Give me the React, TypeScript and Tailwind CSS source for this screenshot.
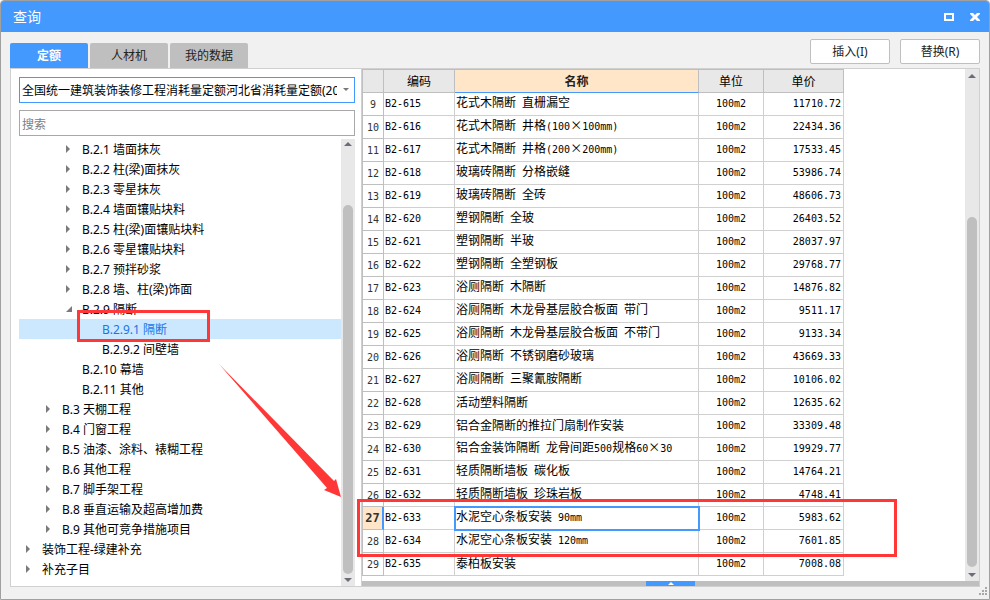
import React from "react";
import { clsx } from "clsx";

type TreeNode = { label: string; level: number; state?: "closed" | "open"; selected?: boolean };

const tree: TreeNode[] = [
  { label: "B.2.1 墙面抹灰", level: 2, state: "closed" },
  { label: "B.2.2 柱(梁)面抹灰", level: 2, state: "closed" },
  { label: "B.2.3 零星抹灰", level: 2, state: "closed" },
  { label: "B.2.4 墙面镶贴块料", level: 2, state: "closed" },
  { label: "B.2.5 柱(梁)面镶贴块料", level: 2, state: "closed" },
  { label: "B.2.6 零星镶贴块料", level: 2, state: "closed" },
  { label: "B.2.7 预拌砂浆", level: 2, state: "closed" },
  { label: "B.2.8 墙、柱(梁)饰面", level: 2, state: "closed" },
  { label: "B.2.9 隔断", level: 2, state: "open" },
  { label: "B.2.9.1 隔断", level: 3, selected: true },
  { label: "B.2.9.2 间壁墙", level: 3 },
  { label: "B.2.10 幕墙", level: 2 },
  { label: "B.2.11 其他", level: 2 },
  { label: "B.3 天棚工程", level: 1, state: "closed" },
  { label: "B.4 门窗工程", level: 1, state: "closed" },
  { label: "B.5 油漆、涂料、裱糊工程", level: 1, state: "closed" },
  { label: "B.6 其他工程", level: 1, state: "closed" },
  { label: "B.7 脚手架工程", level: 1, state: "closed" },
  { label: "B.8 垂直运输及超高增加费", level: 1, state: "closed" },
  { label: "B.9 其他可竞争措施项目", level: 1, state: "closed" },
  { label: "装饰工程-绿建补充", level: 0, state: "closed" },
  { label: "补充子目", level: 0, state: "closed" },
];

const indents = ["pl-1", "pl-6", "pl-11", "pl-16"];

const names: [string, string][] = [
  ["花式木隔断 直栅漏空", "11710.72"],
  ["花式木隔断 井格(100×100mm)", "22434.36"],
  ["花式木隔断 井格(200×200mm)", "17533.45"],
  ["玻璃砖隔断 分格嵌缝", "53986.74"],
  ["玻璃砖隔断 全砖", "48606.73"],
  ["塑钢隔断 全玻", "26403.52"],
  ["塑钢隔断 半玻", "28037.97"],
  ["塑钢隔断 全塑钢板", "29768.77"],
  ["浴厕隔断 木隔断", "14876.82"],
  ["浴厕隔断 木龙骨基层胶合板面 带门", "9511.17"],
  ["浴厕隔断 木龙骨基层胶合板面 不带门", "9133.34"],
  ["浴厕隔断 不锈钢磨砂玻璃", "43669.33"],
  ["浴厕隔断 三聚氰胺隔断", "10106.02"],
  ["活动塑料隔断", "12635.62"],
  ["铝合金隔断的推拉门扇制作安装", "33309.48"],
  ["铝合金装饰隔断 龙骨间距500规格60×30", "19929.77"],
  ["轻质隔断墙板 碳化板", "14764.21"],
  ["轻质隔断墙板 珍珠岩板", "4748.41"],
  ["水泥空心条板安装 90mm", "5983.62"],
  ["水泥空心条板安装 120mm", "7601.85"],
  ["泰柏板安装", "7008.08"],
];

const rows = names.map(([name, price], i) => ({ no: i + 9, code: `B2-${i + 615}`, name, unit: "100m2", price }));

/* Half-width characters go in a smaller monospace so that two of them fill one full-width cell. */
function Mixed({ text }: { text: string }) {
  const parts = text.match(/[\x20-\x7e]+|[^\x20-\x7e]+/g) ?? [];
  return (
    <>
      {parts.map((p, i) =>
        /^[\x20-\x7e]/.test(p) ? (
          <span key={i} className="whitespace-pre font-['DejaVu_Sans_Mono',monospace] text-[10px]">{p}</span>
        ) : (
          <span key={i}>{p}</span>
        ),
      )}
    </>
  );
}

function Expander({ state }: { state?: "closed" | "open" }) {
  return (
    <svg width="18" height="10" viewBox="0 0 18 10" className="shrink-0" fill="#7a7a7a" aria-hidden="true">
      {state === "closed" && <path d="M3 1v8l4-4z" />}
      {state === "open" && <path d="M9 2v6H3z" />}
    </svg>
  );
}

function Scrollbar({ className, thumb }: { className: string; thumb: string }) {
  return (
    <div className={clsx("flex w-3.5 shrink-0 flex-col items-center bg-[#e8e8e8]", className)} aria-hidden="true">
      <svg width="8" height="4" viewBox="0 0 8 4" fill="#6c6c76"><path d="M0 4 4 0l4 4z" /></svg>
      <div className={clsx("w-2.5 flex-1 rounded-full bg-[#bfbfbf]", thumb)} />
      <svg width="8" height="4" viewBox="0 0 8 4" fill="#6c6c76"><path d="M0 0h8L4 4z" /></svg>
    </div>
  );
}

const head = "border-r border-b border-[#bfbfbf] bg-[#e8e8e8] p-0 text-center font-normal";
const cell = "border-r border-b border-[#d0d0d0] p-0 pb-0.5 whitespace-nowrap";

export default function App() {
  return (
    <div className="relative flex min-h-screen flex-col overflow-hidden rounded-t border border-[#a0a0a0] bg-[#f1f1f1] font-['Noto_Sans','Noto_Sans_CJK_SC',sans-serif] text-xs text-black">
      <header className="flex h-[31px] shrink-0 items-center bg-[#4499ff] pl-3 text-white">
        <h1 className="flex-1 text-sm">查询</h1>
        <button aria-label="最大化" className="flex h-6 w-6 items-center justify-center">
          <svg width="10" height="8" viewBox="0 0 10 8"><path d="M1 1h8v6H1z" fill="none" stroke="#fff" strokeWidth="2" /></svg>
        </button>
        <button aria-label="关闭" className="flex h-6 w-7 items-center justify-center">
          <svg width="10" height="8" viewBox="0 0 10 8" fill="#fff">
            <path d="M0 0h3l2 2 2-2h3v1L7 4l3 3v1H7L5 6 3 8H0V7l3-3-3-3z" />
          </svg>
        </button>
      </header>

      <div className="flex h-9 shrink-0 items-end justify-between pr-[9px] pl-[9px]">
        <div role="tablist" className="flex gap-0.5">
          <button role="tab" aria-selected="true" className="h-[25px] w-[78px] rounded-t-xs bg-[#4499ff] font-bold text-white">定额</button>
          <button role="tab" aria-selected="false" className="h-[25px] w-[78px] rounded-t-xs bg-[#bfbfbf] text-[#222]">人材机</button>
          <button role="tab" aria-selected="false" className="h-[25px] w-[78px] rounded-t-xs bg-[#bfbfbf] text-[#222]">我的数据</button>
        </div>
        <div className="flex gap-2.5 pb-1">
          <button className="h-[25px] w-20 rounded-xs border border-[#bfbfbf] bg-white text-[#222]">插入(I)</button>
          <button className="h-[25px] w-20 rounded-xs border border-[#bfbfbf] bg-white text-[#222]">替换(R)</button>
        </div>
      </div>

      <main className="mr-[9px] mb-3 ml-[9px] flex flex-1 border border-[#d0d0d0] bg-white">
        <section className="flex w-[351px] shrink-0 flex-col border-r border-[#d0d0d0] pt-2 pr-1.5 pl-2">
          <div className="relative">
            <select aria-label="定额库" className="block h-[26px] w-full appearance-none border border-[#4499ff] bg-white pt-0.5 pr-[17px] pl-[2px] text-xs">
              <option>全国统一建筑装饰装修工程消耗量定额河北省消耗量定额(2012)</option>
            </select>
            <svg width="6" height="3" viewBox="0 0 6 3" className="pointer-events-none absolute top-[11px] right-1.5" fill="#777"><path d="M0 0h6L3 3z" /></svg>
          </div>
          <input aria-label="搜索" placeholder="搜索" className="mt-[7px] h-[26px] w-full border border-[#a8a8a8] bg-white px-[2px] pt-0.5 text-xs placeholder:text-[#808080]" />
          <div className="mt-[3px] flex flex-1">
            <ul role="tree" className="flex-1">
              {tree.map((n) => (
                <li
                  key={n.label}
                  role="treeitem"
                  aria-selected={!!n.selected}
                  className={clsx("flex h-5 items-center gap-[1px] whitespace-nowrap", indents[n.level], n.selected && "bg-[#cce8ff] text-[#1a75e8]")}
                >
                  <Expander state={n.state} />
                  <span className="pt-0.5">{n.label}</span>
                </li>
              ))}
            </ul>
            <Scrollbar className="pt-[3px] pb-1" thumb="mt-[59px] mb-1" />
          </div>
        </section>

        <section className="flex min-w-0 flex-1 flex-col">
          <div className="flex flex-1">
            <div className="min-w-0 flex-1">
              <table className="w-[482px] table-fixed border-separate border-spacing-0 border-t border-l border-[#bfbfbf] font-['Noto_Sans_CJK_SC',sans-serif] leading-[18px]">
                <colgroup>
                  <col className="w-[21px]" />
                  <col className="w-[71px]" />
                  <col className="w-[244px]" />
                  <col className="w-[65px]" />
                  <col className="w-[80px]" />
                </colgroup>
                <thead>
                  <tr className="h-[23px]">
                    <th className={head} aria-label="序号" />
                    <th className={head}>编码</th>
                    <th className="border-r border-b border-r-[#bfbfbf] border-b-[#4499ff] bg-[#ffe6c8] p-0 text-center font-bold text-[#222]">名称</th>
                    <th className={head}>单位</th>
                    <th className={head}>单价</th>
                  </tr>
                </thead>
                <tbody>
                  {rows.map((r) => {
                    const current = r.no === 27;
                    return (
                      <tr key={r.no} className="h-[23px]">
                        <td
                          className={clsx(
                            "border-b border-[#bfbfbf] p-0 text-center font-['DejaVu_Sans_Mono',monospace] text-[#333]",
                            current ? "border-r-2 border-r-[#4499ff] bg-[#ffe6c8] text-xs font-bold" : "border-r pt-0.5 text-[10px]",
                          )}
                        >
                          {r.no}
                        </td>
                        <td className={clsx(cell, "pl-px")}><Mixed text={r.code} /></td>
                        <td className={clsx(cell, "pl-px", current && "outline-2 -outline-offset-1 outline-[#4499ff]")}><Mixed text={r.name} /></td>
                        <td className={clsx(cell, "text-center")}><Mixed text={r.unit} /></td>
                        <td className={clsx(cell, "pr-0.5 text-right")}><Mixed text={r.price} /></td>
                      </tr>
                    );
                  })}
                </tbody>
              </table>
            </div>
            <Scrollbar className="pt-[5px] pb-1" thumb="mt-[139px] mb-1.5" />
          </div>
          <div className="flex h-[5px] shrink-0 justify-center bg-[#bfbfbf]">
            <button aria-label="展开" className="flex w-[49px] items-center justify-center bg-[#4499ff]">
              <svg width="6" height="3" viewBox="0 0 6 3" fill="#fff"><path d="M0 3 3 0l3 3z" /></svg>
            </button>
          </div>
        </section>
      </main>

      <svg width="8" height="8" viewBox="0 0 8 8" className="absolute right-0.5 bottom-1" fill="#a8a8a8" aria-hidden="true">
        <path d="M6 0h2v2H6zM3 3h2v2H3zM6 3h2v2H6zM0 6h2v2H0zM3 6h2v2H3zM6 6h2v2H6z" />
      </svg>

      {/* Callouts drawn over the window */}
      <div className="pointer-events-none absolute top-[309px] left-[76px] h-8 w-[133px] border-3 border-[#ff3737]" />
      <div className="pointer-events-none absolute top-[498px] left-[356px] h-[58px] w-[540px] border-3 border-[#ff3737]" />
      <svg width="124" height="134" viewBox="0 0 124 134" className="pointer-events-none absolute top-[363px] left-[217px]" aria-hidden="true">
        <path d="M1 0 L116 117 L118 115 L123 133 L106 126 L109 124 Z" fill="#ff3737" />
      </svg>
    </div>
  );
}
